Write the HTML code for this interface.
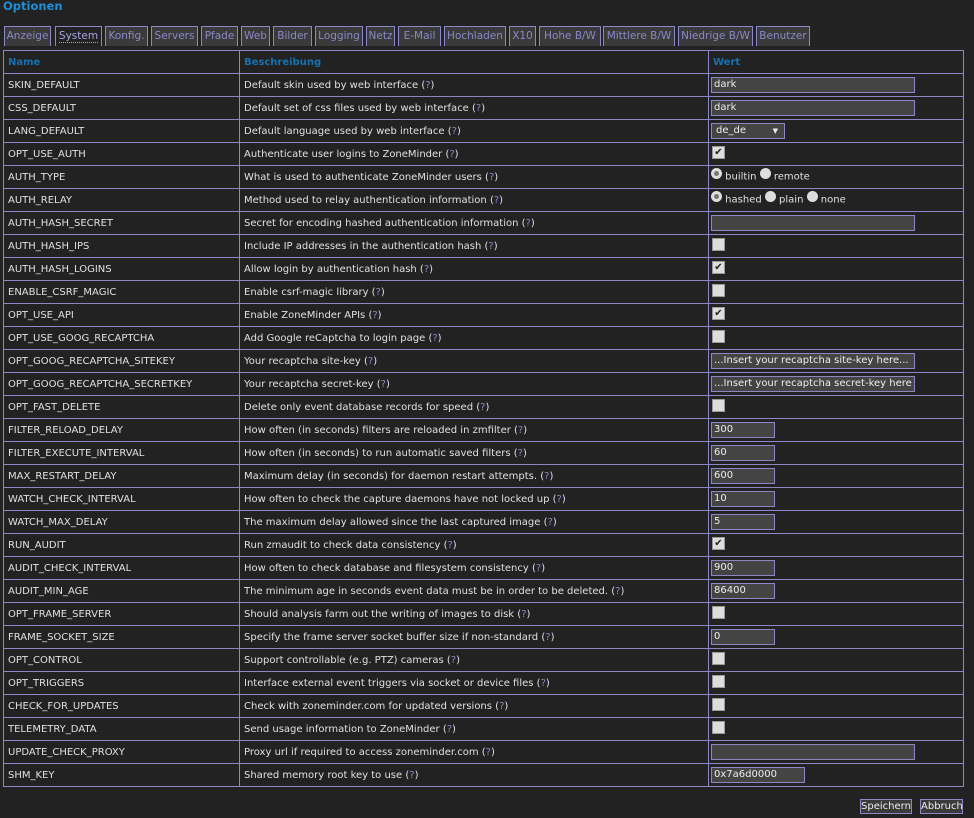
<!DOCTYPE html>
<html><head><meta charset="utf-8"><style>
body{margin:0;background:#222;width:974px;height:818px;overflow:hidden;font-family:"DejaVu Sans","Liberation Sans",sans-serif;font-size:10px;color:#e0e0e0}
h2{position:absolute;left:3px;top:-1px;margin:0;font-size:11.5px;color:#1b8fd9;font-weight:bold}
.tabs{position:absolute;left:0;top:26px;height:20px}
.tab{position:absolute;top:0;border:1px solid #8c88c8;border-bottom:none;background:#3a3a3a;color:#8c88c8;font-size:10.5px;line-height:19px;text-align:center;box-sizing:border-box;height:20px;white-space:nowrap;overflow:hidden}
.tab.sel{background:#222;color:#a9a6e0}
.tab.sel span{border-bottom:1px dotted #aaa}
table{position:absolute;left:3px;top:50px;border-collapse:collapse;table-layout:fixed}
td,th{border:1px solid #8c88c8;height:22px;padding:0 0 0 4px;text-align:left;white-space:nowrap;overflow:hidden;box-sizing:border-box}
td.v{padding-left:2px}
th{color:#1572b0;font-weight:bold;font-size:10px}
tr{height:23px}
.q{color:#8c88c8}
.in{display:inline-block;border:1px solid #8c88c8;background:#444;color:#eee;line-height:14px;padding-left:2px;box-sizing:border-box;vertical-align:middle;height:16px;overflow:hidden}
.w{width:204px}.s{width:64px}
.cb{display:inline-block;width:11px;height:11px;background:#ddd;border:1px solid #999;vertical-align:middle;position:relative;top:-2px;left:1px;color:#222;font-size:10px;line-height:11px;text-align:center;font-weight:bold}
.rb{display:inline-block;width:11px;height:11px;border-radius:50%;background:#ddd;vertical-align:middle;position:relative;top:-3px}
.rb.on::after{content:"";position:absolute;left:3px;top:3px;width:5px;height:5px;border-radius:50%;background:#777}
.btn{position:absolute;top:799px;height:15px;border:1px solid #8c88c8;background:#3a3a3a;color:#eee;font-size:10px;line-height:13px;text-align:center;box-sizing:border-box}
</style></head><body>
<h2>Optionen</h2>
<div class="tabs">
<div class="tab" style="left:4px;width:47px">Anzeige</div>
<div class="tab sel" style="left:55px;width:47px"><span>System</span></div>
<div class="tab" style="left:105px;width:43px">Konfig.</div>
<div class="tab" style="left:151px;width:47px">Servers</div>
<div class="tab" style="left:201px;width:37px">Pfade</div>
<div class="tab" style="left:241px;width:29px">Web</div>
<div class="tab" style="left:273px;width:39px">Bilder</div>
<div class="tab" style="left:315px;width:48px">Logging</div>
<div class="tab" style="left:366px;width:29px">Netz</div>
<div class="tab" style="left:398px;width:43px">E-Mail</div>
<div class="tab" style="left:444px;width:62px">Hochladen</div>
<div class="tab" style="left:509px;width:27px">X10</div>
<div class="tab" style="left:539px;width:62px">Hohe B/W</div>
<div class="tab" style="left:603px;width:72px">Mittlere B/W</div>
<div class="tab" style="left:678px;width:75px">Niedrige B/W</div>
<div class="tab" style="left:756px;width:54px">Benutzer</div>
</div>
<table>
<colgroup><col style="width:236px"><col style="width:469px"><col style="width:255px"></colgroup>
<tr><th>Name</th><th>Beschreibung</th><th>Wert</th></tr>
<tr><td>SKIN_DEFAULT</td><td>Default skin used by web interface (<span class="q">?</span>)</td><td class="v"><span class="in w">dark</span></td></tr>
<tr><td>CSS_DEFAULT</td><td>Default set of css files used by web interface (<span class="q">?</span>)</td><td class="v"><span class="in w">dark</span></td></tr>
<tr><td>LANG_DEFAULT</td><td>Default language used by web interface (<span class="q">?</span>)</td><td class="v"><span class="in" style="width:74px;padding-left:4px">de_de<span style="float:right;margin-right:6px;font-size:7px">▼</span></span></td></tr>
<tr><td>OPT_USE_AUTH</td><td>Authenticate user logins to ZoneMinder (<span class="q">?</span>)</td><td class="v"><span class="cb">✔</span></td></tr>
<tr><td>AUTH_TYPE</td><td>What is used to authenticate ZoneMinder users (<span class="q">?</span>)</td><td class="v"><span class="rb on"></span> builtin <span class="rb"></span> remote</td></tr>
<tr><td>AUTH_RELAY</td><td>Method used to relay authentication information (<span class="q">?</span>)</td><td class="v"><span class="rb on"></span> hashed <span class="rb"></span> plain <span class="rb"></span> none</td></tr>
<tr><td>AUTH_HASH_SECRET</td><td>Secret for encoding hashed authentication information (<span class="q">?</span>)</td><td class="v"><span class="in w"></span></td></tr>
<tr><td>AUTH_HASH_IPS</td><td>Include IP addresses in the authentication hash (<span class="q">?</span>)</td><td class="v"><span class="cb"></span></td></tr>
<tr><td>AUTH_HASH_LOGINS</td><td>Allow login by authentication hash (<span class="q">?</span>)</td><td class="v"><span class="cb">✔</span></td></tr>
<tr><td>ENABLE_CSRF_MAGIC</td><td>Enable csrf-magic library (<span class="q">?</span>)</td><td class="v"><span class="cb"></span></td></tr>
<tr><td>OPT_USE_API</td><td>Enable ZoneMinder APIs (<span class="q">?</span>)</td><td class="v"><span class="cb">✔</span></td></tr>
<tr><td>OPT_USE_GOOG_RECAPTCHA</td><td>Add Google reCaptcha to login page (<span class="q">?</span>)</td><td class="v"><span class="cb"></span></td></tr>
<tr><td>OPT_GOOG_RECAPTCHA_SITEKEY</td><td>Your recaptcha site-key (<span class="q">?</span>)</td><td class="v"><span class="in w">...Insert your recaptcha site-key here...</span></td></tr>
<tr><td>OPT_GOOG_RECAPTCHA_SECRETKEY</td><td>Your recaptcha secret-key (<span class="q">?</span>)</td><td class="v"><span class="in w">...Insert your recaptcha secret-key here</span></td></tr>
<tr><td>OPT_FAST_DELETE</td><td>Delete only event database records for speed (<span class="q">?</span>)</td><td class="v"><span class="cb"></span></td></tr>
<tr><td>FILTER_RELOAD_DELAY</td><td>How often (in seconds) filters are reloaded in zmfilter (<span class="q">?</span>)</td><td class="v"><span class="in s">300</span></td></tr>
<tr><td>FILTER_EXECUTE_INTERVAL</td><td>How often (in seconds) to run automatic saved filters (<span class="q">?</span>)</td><td class="v"><span class="in s">60</span></td></tr>
<tr><td>MAX_RESTART_DELAY</td><td>Maximum delay (in seconds) for daemon restart attempts. (<span class="q">?</span>)</td><td class="v"><span class="in s">600</span></td></tr>
<tr><td>WATCH_CHECK_INTERVAL</td><td>How often to check the capture daemons have not locked up (<span class="q">?</span>)</td><td class="v"><span class="in s">10</span></td></tr>
<tr><td>WATCH_MAX_DELAY</td><td>The maximum delay allowed since the last captured image (<span class="q">?</span>)</td><td class="v"><span class="in s">5</span></td></tr>
<tr><td>RUN_AUDIT</td><td>Run zmaudit to check data consistency (<span class="q">?</span>)</td><td class="v"><span class="cb">✔</span></td></tr>
<tr><td>AUDIT_CHECK_INTERVAL</td><td>How often to check database and filesystem consistency (<span class="q">?</span>)</td><td class="v"><span class="in s">900</span></td></tr>
<tr><td>AUDIT_MIN_AGE</td><td>The minimum age in seconds event data must be in order to be deleted. (<span class="q">?</span>)</td><td class="v"><span class="in s">86400</span></td></tr>
<tr><td>OPT_FRAME_SERVER</td><td>Should analysis farm out the writing of images to disk (<span class="q">?</span>)</td><td class="v"><span class="cb"></span></td></tr>
<tr><td>FRAME_SOCKET_SIZE</td><td>Specify the frame server socket buffer size if non-standard (<span class="q">?</span>)</td><td class="v"><span class="in s">0</span></td></tr>
<tr><td>OPT_CONTROL</td><td>Support controllable (e.g. PTZ) cameras (<span class="q">?</span>)</td><td class="v"><span class="cb"></span></td></tr>
<tr><td>OPT_TRIGGERS</td><td>Interface external event triggers via socket or device files (<span class="q">?</span>)</td><td class="v"><span class="cb"></span></td></tr>
<tr><td>CHECK_FOR_UPDATES</td><td>Check with zoneminder.com for updated versions (<span class="q">?</span>)</td><td class="v"><span class="cb"></span></td></tr>
<tr><td>TELEMETRY_DATA</td><td>Send usage information to ZoneMinder (<span class="q">?</span>)</td><td class="v"><span class="cb"></span></td></tr>
<tr><td>UPDATE_CHECK_PROXY</td><td>Proxy url if required to access zoneminder.com (<span class="q">?</span>)</td><td class="v"><span class="in w"></span></td></tr>
<tr><td>SHM_KEY</td><td>Shared memory root key to use (<span class="q">?</span>)</td><td class="v"><span class="in" style="width:94px">0x7a6d0000</span></td></tr>
</table>
<div class="btn" style="left:860px;width:52px">Speichern</div>
<div class="btn" style="left:920px;width:43px">Abbruch</div>
</body></html>
